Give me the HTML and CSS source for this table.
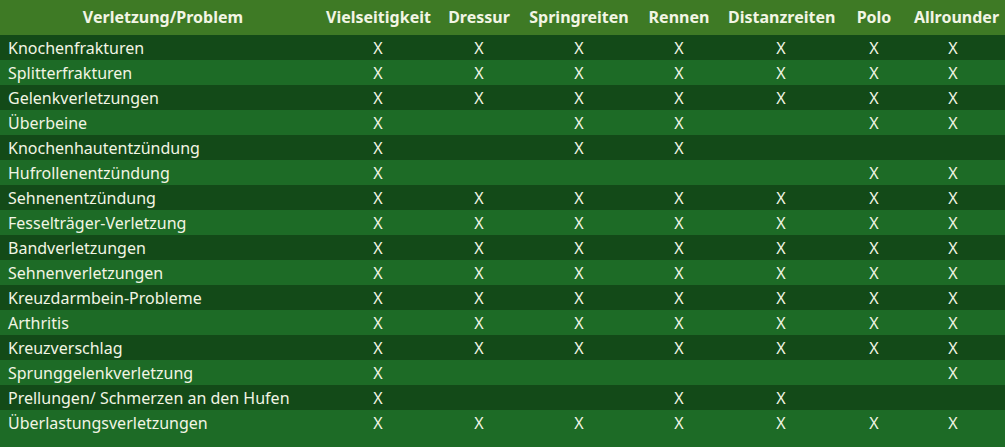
FILE: index.html
```html
<!DOCTYPE html>
<html lang="de">
<head>
<meta charset="utf-8">
<title>Verletzungen</title>
<link rel="stylesheet" href="styles.css">
</head>
<body>
<table class="grid">
  <colgroup>
    <col class="c-name"><col class="c-1"><col class="c-2"><col class="c-3"><col class="c-4"><col class="c-5"><col class="c-6"><col class="c-7">
  </colgroup>
  <thead>
    <tr>
      <th class="name-h">Verletzung/Problem</th>
      <th>Vielseitigkeit</th>
      <th>Dressur</th>
      <th>Springreiten</th>
      <th>Rennen</th>
      <th>Distanzreiten</th>
      <th>Polo</th>
      <th>Allrounder</th>
    </tr>
  </thead>
  <tbody>
    <tr><td class="name">Knochenfrakturen</td><td>X</td><td>X</td><td>X</td><td>X</td><td>X</td><td>X</td><td>X</td></tr>
    <tr><td class="name">Splitterfrakturen</td><td>X</td><td>X</td><td>X</td><td>X</td><td>X</td><td>X</td><td>X</td></tr>
    <tr><td class="name">Gelenkverletzungen</td><td>X</td><td>X</td><td>X</td><td>X</td><td>X</td><td>X</td><td>X</td></tr>
    <tr><td class="name">Überbeine</td><td>X</td><td></td><td>X</td><td>X</td><td></td><td>X</td><td>X</td></tr>
    <tr><td class="name">Knochenhautentzündung</td><td>X</td><td></td><td>X</td><td>X</td><td></td><td></td><td></td></tr>
    <tr><td class="name">Hufrollenentzündung</td><td>X</td><td></td><td></td><td></td><td></td><td>X</td><td>X</td></tr>
    <tr><td class="name">Sehnenentzündung</td><td>X</td><td>X</td><td>X</td><td>X</td><td>X</td><td>X</td><td>X</td></tr>
    <tr><td class="name">Fesselträger-Verletzung</td><td>X</td><td>X</td><td>X</td><td>X</td><td>X</td><td>X</td><td>X</td></tr>
    <tr><td class="name">Bandverletzungen</td><td>X</td><td>X</td><td>X</td><td>X</td><td>X</td><td>X</td><td>X</td></tr>
    <tr><td class="name">Sehnenverletzungen</td><td>X</td><td>X</td><td>X</td><td>X</td><td>X</td><td>X</td><td>X</td></tr>
    <tr><td class="name">Kreuzdarmbein-Probleme</td><td>X</td><td>X</td><td>X</td><td>X</td><td>X</td><td>X</td><td>X</td></tr>
    <tr><td class="name">Arthritis</td><td>X</td><td>X</td><td>X</td><td>X</td><td>X</td><td>X</td><td>X</td></tr>
    <tr><td class="name">Kreuzverschlag</td><td>X</td><td>X</td><td>X</td><td>X</td><td>X</td><td>X</td><td>X</td></tr>
    <tr><td class="name">Sprunggelenkverletzung</td><td>X</td><td></td><td></td><td></td><td></td><td></td><td>X</td></tr>
    <tr><td class="name">Prellungen/ Schmerzen an den Hufen</td><td>X</td><td></td><td></td><td>X</td><td>X</td><td></td><td></td></tr>
    <tr><td class="name">Überlastungsverletzungen</td><td>X</td><td>X</td><td>X</td><td>X</td><td>X</td><td>X</td><td>X</td></tr>
  </tbody>
</table>
</body>
</html>
```
FILE: styles.css
```css
html, body {
  margin: 0;
  padding: 0;
}
body {
  background: #1d6b26;
  font-family: "Noto Sans", "Open Sans", sans-serif;
  color: #f2f5e4;
  font-size: 16px;
}
.grid {
  width: 1005px;
  border-collapse: collapse;
  table-layout: fixed;
}
.c-name { width: 326px; }
.c-1 { width: 104px; }
.c-2 { width: 98px; }
.c-3 { width: 102px; }
.c-4 { width: 98px; }
.c-5 { width: 106px; }
.c-6 { width: 80px; }
.c-7 { width: 91px; }
thead tr {
  background: #3e7a25;
  height: 35px;
}
th {
  font-weight: 700;
  font-size: 16px;
  text-align: center;
  padding: 0 0 2px 0;
  white-space: nowrap;
}
th:last-child,
td:last-child {
  padding-right: 13px;
}
tbody tr {
  height: 25px;
}
tbody tr:nth-child(odd) { background: #134a18; }
tbody tr:nth-child(even) { background: #1d6b26; }
td {
  padding: 2px 0 0 0;
  height: 23px;
  text-align: center;
  white-space: nowrap;
  line-height: 23px;
}
td.name {
  text-align: left;
  padding-left: 8px;
}
```
